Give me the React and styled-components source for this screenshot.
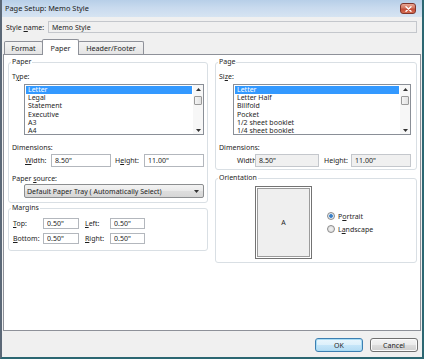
import React from 'react';
import styled, { createGlobalStyle } from 'styled-components';

const GlobalStyle = createGlobalStyle`
  html, body { margin: 0; padding: 0; overflow: hidden; background: #ffffff; }
  body {
    font-family: "Noto Sans", "Open Sans", Arial, sans-serif;
    font-size: 7px;
    color: #1e1e1e;
  }
  * { box-sizing: border-box; }
`;

const Window = styled.div`
  width: 424px;
  height: 359px;
  display: flex;
  flex-direction: column;
  background: #f0f0f0;
  border-left: 2px solid #5b6877;
  border-right: 2px solid #2c6772;
  border-bottom: 2px solid #2c6772;
  overflow: hidden;
`;

const TitleBar = styled.div`
  height: 17px;
  flex: none;
  display: flex;
  align-items: flex-start;
  justify-content: space-between;
  padding: 0 6px 0 3px;
  background: linear-gradient(to bottom, #b7cfe8 0%, #c8daee 45%, #d6e4f2 100%);
`;

const Title = styled.div`
  font-size: 7.4px;
  line-height: 17px;
  color: #1a1a1a;
`;

const CloseButton = styled.div`
  margin-top: 3px;
  width: 16px;
  height: 11px;
  border: 1px solid #80352b;
  border-radius: 3px;
  background: linear-gradient(#e9a694, #d27762 45%, #c44c37 55%, #d46d52);
  display: flex;
  align-items: center;
  justify-content: center;
`;

const StyleRow = styled.div`
  margin-top: 4px;
  height: 12px;
  flex: none;
  display: flex;
  align-items: center;
  padding: 0 5px 0 4px;
`;

const StyleLabel = styled.span`
  width: 42px;
  flex: none;
`;

const TextBox = styled.input.attrs({ type: 'text', readOnly: true })`
  width: ${p => (p.$w ? `${p.$w}px` : 'auto')};
  flex: ${p => (p.$w ? 'none' : '1')};
  min-width: 0;
  height: ${p => p.$h}px;
  margin: 0;
  padding: 0 0 0 3px;
  border: 1px solid ${p => (p.$disabled ? '#c4c7cc' : '#b3b7bd')};
  background: ${p => (p.$disabled ? '#f0f0f0' : '#ffffff')};
  font: inherit;
  font-size: 7px;
  color: #1e1e1e;
  outline: none;
`;

const TabStrip = styled.div`
  height: 15px;
  flex: none;
  margin-top: 6px;
  display: flex;
  align-items: flex-end;
  padding-left: 2px;
`;

const Tab = styled.div`
  position: relative;
  z-index: ${p => (p.$active ? 2 : 1)};
  width: ${p => p.$w}px;
  height: ${p => (p.$active ? 16 : 13)}px;
  margin-left: ${p => (p.$first ? 0 : -1)}px;
  margin-bottom: ${p => (p.$active ? -1 : 0)}px;
  border: 1px solid #8e9199;
  border-bottom: none;
  border-radius: 2px 2px 0 0;
  background: ${p => (p.$active ? '#ffffff' : 'linear-gradient(#f4f4f4, #e4e4e4)')};
  display: flex;
  align-items: center;
  justify-content: center;
  font-size: 7.2px;
`;

const Panel = styled.div`
  flex: 1;
  margin: 0 1px;
  background: #ffffff;
  border: 1px solid #8e9199;
  display: flex;
  gap: 7px;
  padding: 3px 3px 0 4px;
`;

const Column = styled.div`
  width: ${p => p.$w}px;
  flex: none;
  display: flex;
  flex-direction: column;
  gap: ${p => p.$gap}px;
`;

const Group = styled.fieldset`
  margin: 0;
  min-width: 0;
  padding: 0 3px ${p => p.$pb}px 3px;
  border: 1px solid #d9dfe4;
  border-radius: 3px;
`;

const Legend = styled.legend`
  padding: 0 1px;
  margin-left: -1px;
  font-size: 7px;
  line-height: 8px;
`;

const FieldLabel = styled.div`
  margin-top: ${p => p.$mt}px;
  height: 8px;
  line-height: 8px;
  white-space: nowrap;
`;

const Key = styled.span`
  text-decoration: underline;
  text-underline-offset: 1px;
`;

const ListBox = styled.div`
  margin: 3px 0 0 ${p => p.$ml}px;
  width: ${p => p.$w}px;
  height: 51px;
  border: 1px solid #8a8f97;
  background: #ffffff;
  display: flex;
  overflow: hidden;
`;

const ListItems = styled.div`
  flex: 1;
  padding: 1px 1px 0 1px;
  overflow: hidden;
`;

const ListItem = styled.div`
  height: 8.2px;
  line-height: 8.2px;
  padding-left: 2px;
  white-space: nowrap;
  background: ${p => (p.$selected ? '#3399ff' : 'transparent')};
  color: ${p => (p.$selected ? '#ffffff' : 'inherit')};
`;

const ScrollBar = styled.div`
  width: 10px;
  flex: none;
  display: flex;
  flex-direction: column;
  align-items: center;
  background: #f7f7f7;
`;

const ScrollArrow = styled.div`
  height: 8px;
  width: 10px;
  flex: none;
  display: flex;
  align-items: center;
  justify-content: center;
`;

const Thumb = styled.div`
  margin-top: 3px;
  width: 8px;
  height: 9px;
  border: 1px solid #9a9a9a;
  border-radius: 1px;
  background: linear-gradient(to right, #f4f4f4, #e2e2e2);
`;

const Spacer = styled.div`
  flex: 1;
`;

const DimRow = styled.div`
  margin-top: 2px;
  height: 13px;
  display: flex;
  align-items: center;
  padding-left: ${p => p.$pl}px;
`;

const RowLabel = styled.span`
  width: ${p => p.$w}px;
  margin-left: ${p => p.$ml || 0}px;
  flex: none;
  white-space: nowrap;
`;

const Combo = styled.div`
  margin: 1px 0 0 12px;
  width: 180px;
  height: 14px;
  border: 1px solid #8c8e90;
  border-radius: 2px;
  background: linear-gradient(#f3f3f3, #e9e9e9 50%, #dedede 50%, #d6d6d6);
  display: flex;
  align-items: center;
  justify-content: space-between;
  padding: 0 4px 0 2px;
  white-space: nowrap;
`;

const MarginGrid = styled.div`
  margin-top: 6px;
  display: grid;
  grid-template-columns: 31px 36px 31px 35px;
  grid-auto-rows: 11px;
  row-gap: 4px;
  align-items: center;
`;

const GridLabel = styled.span`
  padding-left: ${p => p.$pl}px;
  white-space: nowrap;
`;

const OrientRow = styled.div`
  margin-top: 4px;
  display: flex;
  align-items: center;
  padding-left: 36px;
`;

const Preview = styled.div`
  width: 57px;
  height: 73px;
  flex: none;
  border: 1px solid #737373;
  padding: 1px;
  background: #ffffff;
  display: flex;
`;

const PreviewSheet = styled.div`
  flex: 1;
  border: 1px solid #9b9b9b;
  background: #efefef;
  display: flex;
  align-items: center;
  justify-content: center;
  font-size: 7px;
`;

const RadioGroup = styled.div`
  margin-left: 15px;
  display: flex;
  flex-direction: column;
  gap: 5px;
`;

const RadioRow = styled.div`
  height: 8px;
  display: flex;
  align-items: center;
  gap: 3px;
`;

const RadioCircle = styled.span`
  width: 8px;
  height: 8px;
  flex: none;
  border-radius: 50%;
  border: 1px solid #8b8b8b;
  background: ${p =>
    p.$checked
      ? 'radial-gradient(circle, #2a6fb8 0, #4f8fd0 1.6px, #dfe8f2 2.2px, #e8e8e8 100%)'
      : 'radial-gradient(circle, #f2f2f2, #d9d9d9)'};
`;

const Footer = styled.div`
  height: 26px;
  flex: none;
  display: flex;
  justify-content: flex-end;
  align-items: flex-start;
  gap: 7px;
  padding: 7px 4px 0 0;
`;

const Button = styled.div`
  width: 48px;
  height: 14px;
  border: 1px solid ${p => (p.$default ? '#3c7fb1' : '#707070')};
  border-radius: 3px;
  background: ${p =>
    p.$default
      ? 'linear-gradient(#eaf6fd, #dcf0fb 50%, #c6e6f9 50%, #b4dbf3)'
      : 'linear-gradient(#f4f4f4, #ebebeb 50%, #dddddd 50%, #cfcfcf)'};
  box-shadow: ${p => (p.$default ? 'inset 0 0 0 1px #a8dcf5' : 'inset 0 0 0 1px #fbfbfb')};
  display: flex;
  align-items: center;
  justify-content: center;
  font-size: 7px;
`;

const UpArrow = () => (
  <svg width="5" height="3" viewBox="0 0 5 3"><path d="M0 3 L2.5 0 L5 3 Z" fill="#333" /></svg>
);
const DownArrow = ({ w = 5, h = 3 }) => (
  <svg width={w} height={h} viewBox="0 0 5 3"><path d="M0 0 L5 0 L2.5 3 Z" fill="#333" /></svg>
);

const List = ({ items, ml, w }) => (
  <ListBox $ml={ml} $w={w}>
    <ListItems>
      {items.map((it, i) => (
        <ListItem key={it} $selected={i === 0}>{it}</ListItem>
      ))}
    </ListItems>
    <ScrollBar>
      <ScrollArrow><UpArrow /></ScrollArrow>
      <Thumb />
      <Spacer />
      <ScrollArrow><DownArrow /></ScrollArrow>
    </ScrollBar>
  </ListBox>
);

export default function App() {
  return (
    <>
      <GlobalStyle />
      <Window>
        <TitleBar>
          <Title>Page Setup: Memo Style</Title>
          <CloseButton>
            <svg width="7" height="6" viewBox="0 0 7 6">
              <path d="M1 0.8 L6 5.2 M6 0.8 L1 5.2" stroke="#ffffff" strokeWidth="1.4" strokeLinecap="round" />
            </svg>
          </CloseButton>
        </TitleBar>

        <StyleRow>
          <StyleLabel>Style <Key>n</Key>ame:</StyleLabel>
          <TextBox $h={12} $disabled defaultValue="Memo Style" />
        </StyleRow>

        <TabStrip>
          <Tab $first $w={39}>Format</Tab>
          <Tab $active $w={37}>Paper</Tab>
          <Tab $w={66}>Header/Footer</Tab>
        </TabStrip>

        <Panel>
          <Column $w={200} $gap={1}>
            <Group $pb={4}>
              <Legend>Paper</Legend>
              <FieldLabel $mt={7}>T<Key>y</Key>pe:</FieldLabel>
              <List ml={12} w={180} items={['Letter', 'Legal', 'Statement', 'Executive', 'A3', 'A4']} />
              <FieldLabel $mt={9}>Dimensions:</FieldLabel>
              <DimRow $pl={13}>
                <RowLabel $w={26}><Key>W</Key>idth:</RowLabel>
                <TextBox $w={60} $h={13} defaultValue={'8.50"'} />
                <RowLabel $w={29} $ml={4}>H<Key>e</Key>ight:</RowLabel>
                <TextBox $w={60} $h={13} defaultValue={'11.00"'} />
              </DimRow>
              <FieldLabel $mt={8}>Paper <Key>s</Key>ource:</FieldLabel>
              <Combo>
                <span>Default Paper Tray ( Automatically Select)</span>
                <DownArrow w={5} h={3} />
              </Combo>
            </Group>

            <Group $pb={6}>
              <Legend>Margins</Legend>
              <MarginGrid>
                <GridLabel $pl={1}><Key>T</Key>op:</GridLabel>
                <TextBox $w={36} $h={11} defaultValue={'0.50"'} />
                <GridLabel $pl={6}><Key>L</Key>eft:</GridLabel>
                <TextBox $w={35} $h={11} defaultValue={'0.50"'} />
                <GridLabel $pl={1}><Key>B</Key>ottom:</GridLabel>
                <TextBox $w={36} $h={11} defaultValue={'0.50"'} />
                <GridLabel $pl={6}><Key>R</Key>ight:</GridLabel>
                <TextBox $w={35} $h={11} defaultValue={'0.50"'} />
              </MarginGrid>
            </Group>
          </Column>

          <Column $w={202} $gap={4}>
            <Group $pb={2}>
              <Legend>Page</Legend>
              <FieldLabel $mt={7}>Si<Key>z</Key>e:</FieldLabel>
              <List
                ml={14}
                w={178}
                items={['Letter', 'Letter Half', 'Billfold', 'Pocket', '1/2 sheet booklet', '1/4 sheet booklet']}
              />
              <FieldLabel $mt={9}>Dimensions:</FieldLabel>
              <DimRow $pl={18}>
                <RowLabel $w={18}>Width:</RowLabel>
                <TextBox $w={64} $h={13} $disabled defaultValue={'8.50"'} />
                <RowLabel $w={27} $ml={5}>Height:</RowLabel>
                <TextBox $w={60} $h={13} $disabled defaultValue={'11.00"'} />
              </DimRow>
            </Group>

            <Group $pb={3}>
              <Legend>Orientation</Legend>
              <OrientRow>
                <Preview>
                  <PreviewSheet>A</PreviewSheet>
                </Preview>
                <RadioGroup>
                  <RadioRow>
                    <RadioCircle $checked />
                    <span>P<Key>o</Key>rtrait</span>
                  </RadioRow>
                  <RadioRow>
                    <RadioCircle />
                    <span>L<Key>a</Key>ndscape</span>
                  </RadioRow>
                </RadioGroup>
              </OrientRow>
            </Group>
          </Column>
        </Panel>

        <Footer>
          <Button $default>OK</Button>
          <Button>Cancel</Button>
        </Footer>
      </Window>
    </>
  );
}
